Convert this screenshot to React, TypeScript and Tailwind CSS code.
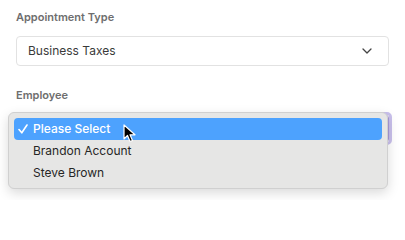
import React from "react";

export default function App() {
  return (
    <div className="w-[405px] h-[200px] bg-white relative overflow-hidden" style={{ fontFamily: "Inter, 'Noto Sans', sans-serif" }}>
      <div className="px-4 pt-[10px] flex flex-col">
        <div className="text-[11px] font-semibold text-[#6e6e6e] leading-[14px]">Appointment Type</div>
        <div className="mt-[12px] h-[30px] border border-[#e2e2e2] rounded-[4px] flex items-center justify-between pl-[11px] pr-[16px]">
          <span className="text-[12px] text-[#3a3a3a]">Business Taxes</span>
          <svg width="10" height="6" viewBox="0 0 10 6" fill="none">
            <path d="M1 1l4 4 4-4" stroke="#444" strokeWidth="1.3" strokeLinecap="round" strokeLinejoin="round" />
          </svg>
        </div>
        <div className="mt-[22px] text-[11px] font-semibold text-[#6e6e6e] leading-[14px]">Employee</div>
        <div className="mt-[10px] h-[33px] rounded-[5px] border-[3px] border-[#c9c0ec] -mx-[3px]">
          <div className="h-full w-full border border-[#a89ad8] rounded-[3px] bg-white"></div>
        </div>
      </div>
      {/* dropdown menu overlay */}
      <div className="absolute left-[8px] top-[112px] w-[380px] h-[77px] rounded-[6px] bg-[#e6e6e5] border border-[#d0d0d0] shadow-[0_4px_12px_rgba(0,0,0,0.15)] px-[5px] pt-[5px]">
        <div className="h-[22px] rounded-[4px] bg-[#4da2fe] flex items-center text-white text-[12px]">
          <span className="w-[19px] pl-[4px] flex items-center">
            <svg width="10" height="10" viewBox="0 0 10 10" fill="none">
              <path d="M1 5.5 L3.8 8.8 L9 1" stroke="#fff" strokeWidth="1.6" strokeLinecap="round" strokeLinejoin="round" />
            </svg>
          </span>
          <span className="font-medium">Please Select</span>
        </div>
        <div className="h-[22px] flex items-center text-[12px] text-[#262626] pl-[19px]">Brandon Account</div>
        <div className="h-[22px] flex items-center text-[12px] text-[#262626] pl-[19px]">Steve Brown</div>
      </div>
      {/* cursor */}
      <svg className="absolute left-[123px] top-[124px]" width="14" height="20" viewBox="0 0 14 20">
        <path d="M1 1 L1 15 L4.5 11.5 L7 17.5 L9.5 16.5 L7 10.8 L12 10.8 Z" fill="#000" stroke="#fff" strokeWidth="1.2" strokeLinejoin="round" />
      </svg>
    </div>
  );
}
